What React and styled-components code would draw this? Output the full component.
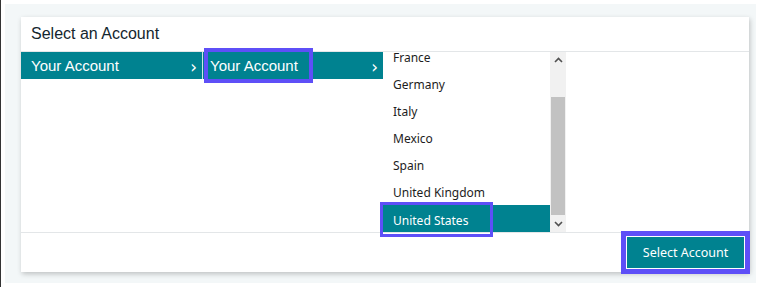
import React from "react";
import styled, { createGlobalStyle } from "styled-components";

const GlobalStyle = createGlobalStyle`
  html, body { margin: 0; padding: 0; background: #fff; }
  body { font-family: "Liberation Sans", Arial, sans-serif; }
`;

const TEAL = "#008290";
const FOCUS = "#5e4ff7";

const Frame = styled.div`
  width: 759px;
  height: 287px;
  box-sizing: border-box;
  border-left: 1px solid #333;
  padding: 4px 3px 4px 4px;
`;

const Backdrop = styled.div`
  height: 100%;
  box-sizing: border-box;
  background: #f3f7f8;
  padding: 13px 7px 11px 16px;
`;

const Card = styled.div`
  height: 100%;
  background: #fff;
  box-shadow: 1px 2px 5px rgba(0, 0, 0, 0.22);
  display: flex;
  flex-direction: column;
`;

const Header = styled.div`
  height: 35px;
  box-sizing: border-box;
  border-bottom: 1px solid #e3e6e8;
  padding: 8px 10px 0;
  font-size: 16px;
  color: #14262e;
`;

const Body = styled.div`
  height: 180px;
  display: flex;
  border-bottom: 1px solid #e3e6e8;
`;

const Column = styled.div`
  width: ${(p) => p.$width}px;
`;

const AccountItem = styled.div`
  height: 27px;
  background: ${TEAL};
  color: #fff;
  font-size: 15px;
  display: flex;
  align-items: center;
  justify-content: space-between;
  padding: 0 4px 0 ${(p) => p.$pad}px;
  border-right: ${(p) => (p.$divider ? "1px solid #cfe3e6" : "none")};
`;

const ItemLabel = styled.span`
  height: 27px;
  display: flex;
  align-items: center;
  box-sizing: border-box;
  ${(p) =>
    p.$focused &&
    `
    width: 101px;
    padding-left: 2px;
    outline: 4px solid ${FOCUS};
  `}
`;

const Chevron = styled.span`
  font-family: "DejaVu Sans", sans-serif;
  font-size: 17px;
  line-height: 1;
  margin: 4px 1px 0 0;
`;

const ListBox = styled.div`
  display: flex;
  width: 183px;
  height: 180px;
`;

const ListViewport = styled.div`
  flex: 1;
  clip-path: inset(0 -20px -20px -20px);
`;

const List = styled.ul`
  list-style: none;
  margin: -9px 0 0;
  padding: 0;
`;

const Country = styled.li`
  height: 27px;
  box-sizing: border-box;
  display: flex;
  align-items: center;
  padding: 2px 0 0 ${(p) => (p.$selected ? 0 : 10)}px;
  font-family: "Noto Sans", "DejaVu Sans", sans-serif;
  font-size: 12px;
  color: #1d1d1d;
  background: ${(p) => (p.$selected ? TEAL : "transparent")};
  ${(p) => p.$selected && "color: #fff; padding-top: 0; align-items: flex-start;"}
`;

const SelectedLabel = styled.span`
  box-sizing: border-box;
  height: 29px;
  width: 107px;
  display: flex;
  align-items: center;
  padding: 1px 0 0 10px;
  outline: 3px solid ${FOCUS};
`;

const ScrollTrack = styled.div`
  width: 16px;
  background: #f1f1f1;
  display: flex;
  flex-direction: column;
`;

const ScrollArrow = styled.div`
  height: 16px;
  display: flex;
  align-items: center;
  justify-content: center;
  color: #505050;
`;

const ScrollSpace = styled.div`
  flex: 1;
  display: flex;
  flex-direction: column;
  padding: 0 1px;
`;

const ScrollThumb = styled.div`
  margin-top: ${(p) => p.$top}px;
  height: ${(p) => p.$size}px;
  background: #c2c2c2;
`;

const Footer = styled.div`
  flex: 1;
  display: flex;
  justify-content: flex-end;
  align-items: flex-start;
  padding: 3px 4px 0 0;
`;

const PrimaryButton = styled.button`
  height: 33px;
  width: 119px;
  background: ${TEAL};
  color: #fff;
  border: 1px solid #fff;
  outline: 5px solid ${FOCUS};
  font-family: "Noto Sans", "DejaVu Sans", sans-serif;
  font-size: 12.5px;
  padding: 0;
  cursor: pointer;
`;

const Arrow = ({ up }) => (
  <svg width="9" height="6" viewBox="0 0 9 6">
    <path
      d={up ? "M1 5 L4.5 1.5 L8 5" : "M1 1 L4.5 4.5 L8 1"}
      fill="none"
      stroke="currentColor"
      strokeWidth="1.6"
    />
  </svg>
);

const countries = ["France", "Germany", "Italy", "Mexico", "Spain", "United Kingdom", "United States"];

export default function App() {
  return (
    <>
      <GlobalStyle />
      <Frame>
        <Backdrop>
          <Card>
            <Header>Select an Account</Header>
            <Body>
              <Column $width={182}>
                <AccountItem $pad={10} $divider>
                  <ItemLabel>Your Account</ItemLabel>
                  <Chevron>›</Chevron>
                </AccountItem>
              </Column>
              <Column $width={180}>
                <AccountItem $pad={5}>
                  <ItemLabel $focused>Your Account</ItemLabel>
                  <Chevron>›</Chevron>
                </AccountItem>
              </Column>
              <ListBox>
                <ListViewport>
                  <List>
                    {countries.map((c) =>
                      c === "United States" ? (
                        <Country key={c} $selected>
                          <SelectedLabel>{c}</SelectedLabel>
                        </Country>
                      ) : (
                        <Country key={c}>{c}</Country>
                      )
                    )}
                  </List>
                </ListViewport>
                <ScrollTrack>
                  <ScrollArrow>
                    <Arrow up />
                  </ScrollArrow>
                  <ScrollSpace>
                    <ScrollThumb $top={29} $size={118} />
                  </ScrollSpace>
                  <ScrollArrow>
                    <Arrow />
                  </ScrollArrow>
                </ScrollTrack>
              </ListBox>
            </Body>
            <Footer>
              <PrimaryButton>Select Account</PrimaryButton>
            </Footer>
          </Card>
        </Backdrop>
      </Frame>
    </>
  );
}
